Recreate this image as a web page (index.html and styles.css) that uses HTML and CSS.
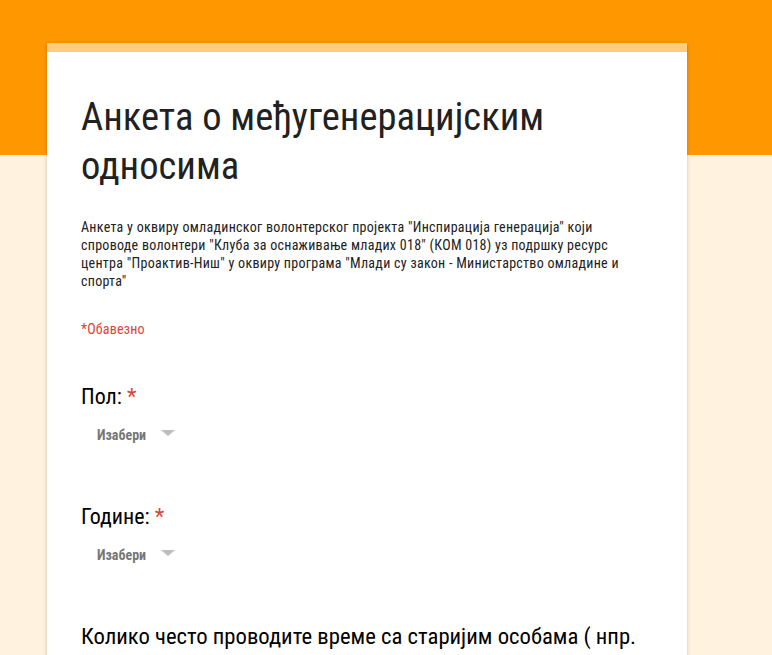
FILE: index.html
```html
<!DOCTYPE html>
<html lang="sr">
<head>
<meta charset="utf-8">
<title>Анкета о међугенерацијским односима</title>
<link rel="stylesheet" href="styles.css">
</head>
<body>
<div class="page">
  <main class="card">
    <header class="card-head">
      <h1 class="title">Анкета о међугенерацијским односима</h1>
      <p class="desc">Анкета у оквиру омладинског волонтерског пројекта "Инспирација генерација" који спроводе волонтери "Клуба за оснаживање младих 018" (КОМ 018) уз подршку ресурс центра "Проактив-Ниш" у оквиру програма "Млади су закон - Министарство омладине и спорта"</p>
      <p class="required-note">*Обавезно</p>
    </header>
    <section class="question first">
      <div class="q-title">Пол: <span class="star">*</span></div>
      <div class="select"><span class="select-label">Изабери</span><span class="arrow"></span></div>
    </section>
    <section class="question">
      <div class="q-title">Године: <span class="star">*</span></div>
      <div class="select"><span class="select-label">Изабери</span><span class="arrow"></span></div>
    </section>
    <section class="question last">
      <div class="q-title big">Колико често проводите време са старијим особама ( нпр. баке, деке, комшије)</div>
    </section>
  </main>
</div>
</body>
</html>
```
FILE: styles.css
```css
html, body {
  margin: 0;
  padding: 0;
}
body {
  background: #fff3e0;
  font-family: "Roboto Condensed", "Liberation Sans Narrow", Roboto, sans-serif;
  color: #212121;
  height: 655px;
  overflow: hidden;
}
.page {
  background: linear-gradient(to bottom, #ff9800 0, #ff9800 155px, #fff3e0 155px);
  padding: 43px 0 0 47px;
  min-height: 655px;
  box-sizing: border-box;
}
.card {
  width: 640px;
  min-height: 700px;
  background: #fff;
  border-top: 9px solid #ffcc80;
  box-shadow: 0 1px 4px rgba(0,0,0,0.22);
  box-sizing: border-box;
  padding: 40px 14px 0 34px;
}
.title {
  margin: 0;
  font-weight: 400;
  font-size: 38.5px;
  line-height: 49px;
  color: #212121;
}
.desc {
  margin: 28px 0 0;
  max-width: 555px;
  font-size: 14px;
  line-height: 18px;
  letter-spacing: 0.28px;
  color: #212121;
}
.required-note {
  margin: 30px 0 0;
  font-size: 14px;
  line-height: 18px;
  letter-spacing: 0.2px;
  color: #db4437;
}
.question {
  margin-top: 58px;
}
.question.first {
  margin-top: 45px;
}
.question.last {
  margin-top: 56px;
}
.q-title {
  font-size: 22px;
  line-height: 28px;
  color: #000;
}
.q-title.big {
  font-size: 22.7px;
  line-height: 32px;
}
.star {
  color: #db4437;
}
.select {
  display: flex;
  align-items: center;
  gap: 15px;
  margin: 14px 0 0 16px;
  height: 20px;
}
.select-label {
  font-size: 14px;
  line-height: 20px;
  font-weight: 700;
  color: #777;
}
.arrow {
  width: 0;
  height: 0;
  margin-bottom: 4px;
  border-left: 7px solid transparent;
  border-right: 7px solid transparent;
  border-top: 6px solid #bdbdbd;
}
```
